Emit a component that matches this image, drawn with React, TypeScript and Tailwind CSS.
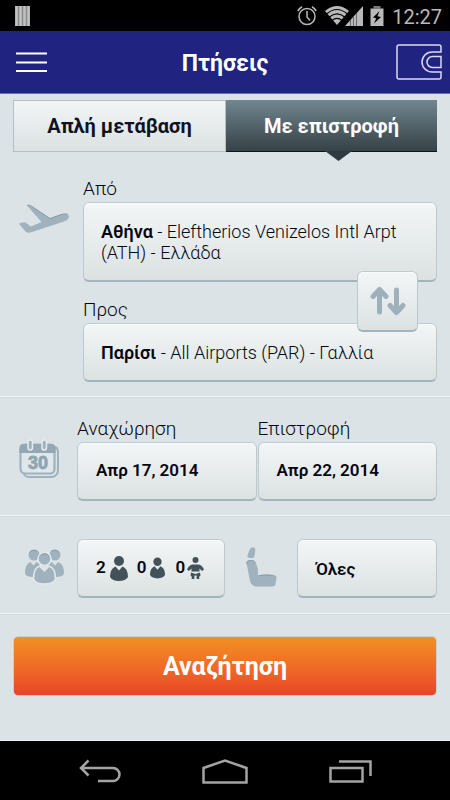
import { useState } from 'react'

const field =
  'rounded-[6px] border border-t-[#c0cbcf] border-x-[#bcc8cd] border-b-2 border-b-[#a3b4bc] bg-gradient-to-b from-[#f2f6f7] to-[#dce1e2] text-left text-[#05060f] shadow-[inset_0_1px_0_#f8fbfb]'

const label = 'block pt-px pb-px text-[19px] leading-6 text-[#05060f] font-light'

function StatusBar() {
  return (
    <div className="flex h-[31px] items-center justify-between bg-black pl-[15px] pr-2 text-[#b9b9b9]">
      <svg width="15" height="20" viewBox="0 0 15 20">
        <rect width="15" height="20" fill="#8b8b8b" />
        <path d="M1.5 0v20M5.5 0v20M9.5 0v20M13.5 0v20" stroke="#c4c4c4" strokeWidth="2.4" />
      </svg>
      <div className="flex items-center">
        {/* alarm */}
        <svg width="20" height="21" viewBox="0 0 20 21" fill="none" stroke="currentColor">
          <circle cx="10" cy="11.5" r="8" strokeWidth="1.5" />
          <path d="M10 6v6l3 3.5" strokeWidth="1.5" />
          <path d="M0.8 6A12 12 0 0 1 5 1.8M19.2 6A12 12 0 0 0 15 1.8" strokeWidth="1.6" />
        </svg>
        {/* wifi */}
        <svg className="ml-2" width="24" height="19" viewBox="0 0 24 19">
          <path d="M12 19 0 5Q12-5 24 5Z" fill="currentColor" />
          <path d="M1.5 8Q12-1 22.5 8M4 11.3Q12 4.5 20 11.3M6.8 14.6Q12 10 17.2 14.6" fill="none" stroke="#000" strokeWidth="1.2" />
        </svg>
        {/* signal */}
        <svg className="-ml-1" width="18" height="20" viewBox="0 0 18 20">
          <path d="M0 20 18 0v20Z" fill="currentColor" />
          <path d="M5.5 14v6M8.5 11v9M11.5 7v13" stroke="#555" strokeWidth="0.8" />
        </svg>
        {/* battery */}
        <svg className="ml-[7px]" width="14" height="20" viewBox="0 0 14 20">
          <path d="M3.5 0h7v2.5h-7Z" fill="#777" />
          <path d="M0.5 2.5h13V20h-13Z" fill="currentColor" />
          <path d="M9.5 5 3 11.5l3.2 0.7L4 17.5l7-6.5-3.5-0.7Z" fill="#000" />
        </svg>
        <span className="ml-2 pt-[2px] text-[20px] leading-6">12:27</span>
      </div>
    </div>
  )
}

function PlaneIcon() {
  return (
    <svg width="52" height="30" viewBox="0 0 52 30">
      <path d="M9 1.5Q10.5 .8 12.5 1.5L32 14.5 43 10.6Q50 8.8 51 12.5 51 15.5 46 17.5L14 28Q9.5 29.5 7.5 27.5L1.5 20.5Q.5 19 2.5 19L7 18.2 13 22.5 23.5 18Z" fill="#9fb2bd" />
      <path d="M9 1.5Q10.5 .8 12.5 1.5L32 14.5 43 10.6Q48 9 50 10.6" fill="none" stroke="#869ba7" />
    </svg>
  )
}

function CalendarIcon() {
  return (
    <svg width="42" height="40" viewBox="0 0 42 40">
      <path d="M37 8q3 1 3 5v18q0 6-6 7H12q-5 0-6-3" fill="none" stroke="#9fb2bd" strokeWidth="2" />
      <rect x="2.5" y="5.5" width="34" height="29" rx="4.5" fill="#e0e7ea" stroke="#9fb2bd" strokeWidth="2.2" />
      <path d="M1.5 14V9q0-4 4-4h28q4 0 4 4v5Z" fill="#94a8b3" />
      <rect x="10" y="1" width="4.5" height="10" rx="2.2" fill="#9fb2bd" stroke="#e6ecee" strokeWidth="1.5" />
      <rect x="24" y="1" width="4.5" height="10" rx="2.2" fill="#9fb2bd" stroke="#e6ecee" strokeWidth="1.5" />
      <text x="20" y="29.5" textAnchor="middle" fontFamily="Liberation Sans" fontWeight="700" fontSize="18" stroke="#91a5b0" strokeWidth="0.8" fill="#91a5b0">30</text>
    </svg>
  )
}

function GroupIcon() {
  return (
    <svg width="40" height="36" viewBox="0 0 40 36" fill="#9fb2bd">
      <circle cx="10" cy="6" r="5.5" />
      <path d="M6.5 13 9.5 16.5 12.5 13Q16 14 16 18L10 28Q1 28 1 24 1 15 6.5 13Z" />
      <circle cx="31" cy="6" r="5.5" />
      <path d="M34 13 31 16.5 28 13Q24 14 24 18L31 28Q40 28 40 24 40 15 34 13Z" />
      <g stroke="#e3e9eb" strokeWidth="1.5">
        <circle cx="20.5" cy="10" r="6.5" />
        <path d="M15.5 17 20.5 22 25 17Q31.5 19 31.5 30 29 35 20.5 35 11.5 35 9.5 30 9.5 19 15.5 17Z" />
      </g>
      <path d="M5.5 3.5A5.5 5.5 0 0 1 13.5 2.5M27 2.5A5.5 5.5 0 0 1 35 3.5M15.5 7.5A6 6 0 0 1 25.5 7.5" fill="none" stroke="#879ca7" />
    </svg>
  )
}

function SeatIcon() {
  return (
    <svg width="32" height="41" viewBox="0 0 32 41" fill="#9fb2bd">
      <path d="M3.5 3Q4 .5 6 .5H7.5Q9.5 .5 9.3 3L8.6 8.5Q8.3 11 6.5 11H3.5Q1 11 1.5 8.5Z" />
      <path d="M0.5 16Q0.500 13.500 3.500 13.500H6.500Q8.500 13.500 9.500 16Q12.500 20 12 28.500Q19 27 27 28 31 28 30.500 31L29.500 37Q29 39.500 26 39.500H11Q5.500 39.500 4 34Z" />
      <path d="M0.500 17Q0.500 13.500 3.500 13.500H6.500Q8.500 13.500 9.500 16M12.500 28.700Q19 27.500 27 28.300" fill="none" stroke="#879ca7" />
    </svg>
  )
}

function PersonIcon({ width, height }: { width: number; height: number }) {
  return (
    <svg width={width} height={height} viewBox="0 0 18 25" fill="#43525a">
      <circle cx="9" cy="5" r="5" />
      <path d="M5.5 10.5 9 14.5 12.5 10.5Q18 12.5 18 21 15.5 25 9 25 2.5 25 0 21 0 12.5 5.5 10.5Z" />
    </svg>
  )
}

function BabyIcon() {
  return (
    <svg width="17" height="22" viewBox="0 0 17 22" fill="#43525a">
      <circle cx="8.5" cy="3" r="3" />
      <path d="M5.5 7.5H11.5Q15 8 17 12.5L15 14 12.5 11.5V14.5H4.5V11.5L2 14 0 12.5Q2 8 5.5 7.5Z" />
      <path d="M4 15.500 8.500 17 13 15.500 13.500 18.500 12 20 12.500 22H9.700L9.500 18.500H7.500L7.300 22H4.500L5 20 3.500 18.500Z" />
    </svg>
  )
}

function Divider() {
  return <div className="h-[2px] border-t border-b border-t-[#f1f5f6] border-b-[#cfdadf]" />
}

export default function App() {
  const [roundTrip, setRoundTrip] = useState(true)
  const [swapped, setSwapped] = useState(false)

  const athens = { city: 'Αθήνα', rest: ' - Eleftherios Venizelos Intl Arpt (ATH) - Ελλάδα' }
  const paris = { city: 'Παρίσι', rest: ' - All Airports (PAR) - Γαλλία' }
  const from = swapped ? paris : athens
  const to = swapped ? athens : paris

  const tab = 'relative h-[52px] flex-1 text-[20px] font-bold'
  const tabOff = 'border border-[#b6c0c3] bg-gradient-to-b from-[#f1f5f5] to-[#dce1e2] text-[#10121f]'
  const tabOn = 'border-b border-[#0c1620] bg-gradient-to-b from-[#728790] to-[#364247] text-white'
  const arrow = (
    <svg className="absolute left-1/2 top-full -ml-[7px]" width="27" height="10" viewBox="0 0 27 10">
      <path d="M0 0H27L13.5 10Z" fill="#2e3a40" />
    </svg>
  )

  return (
    <div className="flex min-h-screen flex-col bg-[#dce3e6] font-[Roboto,'Noto_Sans',sans-serif]">
      <StatusBar />

      {/* Header */}
      <header className="flex h-[63px] items-center justify-between border-b border-[#6b70b0] bg-[#20237f] pl-4 pr-2">
        <button aria-label="Menu" className="w-[38px]">
          <svg width="31" height="21" viewBox="0 0 31 21" stroke="#fff" strokeWidth="2">
            <path d="M0 1.5H31M0 10.5H31M0 19H31" />
          </svg>
        </button>
        <h1 className="pt-[3px] text-[23px] leading-7 font-bold text-white">Πτήσεις</h1>
        <button aria-label="Wallet">
          <svg width="46" height="36" viewBox="0 0 46 36" fill="none" stroke="#d9daf0" strokeWidth="1.5">
            <path d="M45 8V3Q45 1 43 1H3Q1 1 1 3V33Q1 35 3 35H43Q45 35 45 33V28H36A10 10 0 0 1 36 8Z" />
            <path d="M45 12.5V23.5H36.5A5.5 5.5 0 0 1 36.5 12.5Z" />
          </svg>
        </button>
      </header>

      <main className="flex-1 border-b border-[#eef3f4]">
        {/* Trip type */}
        <div role="tablist" className="flex px-[13px] pt-[6px]">
          <button role="tab" aria-selected={!roundTrip} onClick={() => setRoundTrip(false)} className={`${tab} ${roundTrip ? tabOff : tabOn}`}>
            Απλή μετάβαση
            {!roundTrip && arrow}
          </button>
          <button role="tab" aria-selected={roundTrip} onClick={() => setRoundTrip(true)} className={`${tab} ${roundTrip ? tabOn : tabOff}`}>
            Με επιστροφή
            {roundTrip && arrow}
          </button>
        </div>

        {/* Airports */}
        <section className="flex pt-6 pr-[13px] pb-[14px]">
          <div className="w-[83px] shrink-0 pt-7 pl-[18px]">
            <PlaneIcon />
          </div>
          <div className="flex-1">
            <label htmlFor="from" className={label}>Από</label>
            <button id="from" className={`${field} min-h-[80px] w-full px-[17px] text-[18px] leading-[21px] font-light`}>
              <b className="font-semibold">{from.city}</b>{from.rest}
            </button>
            <div className="relative mt-[15px]">
              <label htmlFor="to" className={label}>Προς</label>
              <button id="to" className={`${field} min-h-[59px] w-full px-[17px] text-[18px] leading-[21px] font-light`}>
                <b className="font-semibold">{to.city}</b>{to.rest}
              </button>
              <button
                aria-label="Swap airports"
                onClick={() => setSwapped(!swapped)}
                className={`${field} absolute -top-[26px] right-[19px] flex size-[61px] items-center justify-center`}
              >
                <svg width="36" height="30" viewBox="0 0 36 30" fill="none" stroke="#9db0bb" strokeWidth="5" strokeLinecap="round" strokeLinejoin="round">
                  <path d="M9.5 26V4M3 10.5 9.5 3.5 16 10.5M26.5 4V26M20 19.5 26.5 26.5 33 19.5" />
                </svg>
              </button>
            </div>
          </div>
        </section>
        <Divider />

        {/* Dates */}
        <section className="flex pt-[18px] pr-[13px] pb-[14px]">
          <div className="w-[77px] shrink-0 pt-[23px] pl-[18px]">
            <CalendarIcon />
          </div>
          <div className="flex flex-1 gap-px">
            <div className="flex-1">
              <label htmlFor="depart" className={label}>Αναχώρηση</label>
              <button id="depart" className={`${field} h-[59px] w-full px-[18px] text-[17px] font-semibold`}>Απρ 17, 2014</button>
            </div>
            <div className="flex-1">
              <label htmlFor="return" className={label}>Επιστροφή</label>
              <button id="return" className={`${field} h-[59px] w-full px-[18px] text-[17px] font-semibold`}>Απρ 22, 2014</button>
            </div>
          </div>
        </section>
        <Divider />

        {/* Passengers and cabin */}
        <section className="flex items-center pt-[22px] pr-[13px] pb-[15px]">
          <div className="w-[77px] shrink-0 pb-[3px] pl-6">
            <GroupIcon />
          </div>
          <button aria-label="Passengers" className={`${field} flex h-[59px] w-[148px] items-center pl-[18px] text-[17px] font-semibold`}>
            2<span className="ml-1"><PersonIcon width={18} height={25} /></span>
            <span className="ml-[9px]">0</span><span className="ml-1"><PersonIcon width={15} height={22} /></span>
            <span className="ml-[10px]">0</span><span className="ml-[2px]"><BabyIcon /></span>
          </button>
          <div className="ml-[21px] w-[51px] shrink-0 pb-[3px]">
            <SeatIcon />
          </div>
          <select aria-label="Cabin class" className={`${field} h-[59px] min-w-0 flex-1 appearance-none px-4 pt-[3px] indent-[2px] text-[17px] font-semibold`}>
            <option>Όλες</option>
          </select>
        </section>
        <Divider />

        <div className="px-[13px] pt-[21px] pb-11">
          <button className="h-[60px] w-full rounded-[5px] border border-[#cbd0cf] bg-gradient-to-b from-[#f29022] to-[#eb4128] pt-[2px] text-[25px] font-bold text-white">
            Αναζήτηση
          </button>
        </div>
      </main>

      {/* System navigation */}
      <nav className="flex h-[60px] items-center justify-center bg-black text-[#a4a4a4]">
        <button aria-label="Back" className="flex w-[125px] justify-center">
          <svg width="42" height="24" viewBox="0 0 42 24" fill="none" stroke="currentColor" strokeWidth="2.5">
            <path d="M9.5 1.5 2 9 9.5 16.5M2 9H34A6.5 6.5 0 0 1 34 22H19" />
          </svg>
        </button>
        <button aria-label="Home" className="flex w-[125px] justify-center">
          <svg width="46" height="25" viewBox="0 0 46 25" fill="none" stroke="currentColor" strokeWidth="2.5">
            <path d="M1.5 23.5V9L23 1.5 44.5 9V23.5Z" />
          </svg>
        </button>
        <button aria-label="Recent apps" className="flex w-[125px] justify-center">
          <svg width="43" height="23" viewBox="0 0 43 23" fill="none" stroke="currentColor" strokeWidth="2.5">
            <path d="M1.5 8H33.5V21.5H1.5ZM10 1.5H41.5V16" />
          </svg>
        </button>
      </nav>
    </div>
  )
}
